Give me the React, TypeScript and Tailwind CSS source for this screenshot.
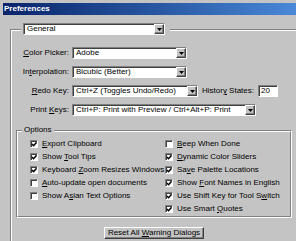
import type { ReactNode } from "react";

const sunken =
  "border border-t-[#808080] border-l-[#808080] border-b-white border-r-white shadow-[inset_1px_1px_0_#404040]";
const raised =
  "border border-t-white border-l-white border-b-[#404040] border-r-[#404040] shadow-[inset_-1px_-1px_0_#808080]";

const Select = ({ value, className }: { value: string; className: string }) => {
  return (
    <div className={`flex h-[12px] bg-white ${sunken} ${className}`}>
      <span className="flex-1 pl-[3px] leading-[10px] whitespace-nowrap overflow-hidden">{value}</span>
      <span className={`w-[10px] bg-[#c4c4c4] flex items-center justify-center ${raised}`}>
        <svg width="5" height="3" viewBox="0 0 5 3">
          <path d="M0 0H5L2.5 3Z" fill="#000" />
        </svg>
      </span>
    </div>
  );
};

const Check = ({ checked, children }: { checked: boolean; children: ReactNode }) => {
  return (
    <div className="flex items-center h-[13px] gap-[4px] whitespace-nowrap">
      <span className={`w-[8px] h-[8px] bg-white flex items-center justify-center ${sunken}`}>
        {checked && (
          <svg width="6" height="6" viewBox="0 0 7 7">
            <path d="M1 3.5L3 5.5L6.5 1.5" stroke="#000" strokeWidth="1.8" fill="none" />
          </svg>
        )}
      </span>
      <span className="leading-[10px]">{children}</span>
    </div>
  );
};

export default function App() {
  return (
    <div className="w-[296px] h-[241px] overflow-hidden bg-[#c4c4c4] pl-[3px] pt-[3px] text-[8px] text-black font-['Liberation_Sans',Arial,sans-serif]">
      <div className="h-[12px] bg-gradient-to-r from-[#0a246a] to-[#4a88d8] pl-[1px] flex items-center">
        <span className="text-white font-bold leading-[10px]">Preferences</span>
      </div>

      <div className="ml-[7px] mt-[14px] w-[300px] h-[240px] border-t border-l border-[#808080]">
        <div className="border-t border-l border-white h-full">
          <div className="-mt-[8px] ml-[9px] w-fit bg-[#c4c4c4] pl-[2px] pr-[5px]">
            <Select value="General" className="w-[142px]" />
          </div>

          <div className="mt-[12px] grid grid-cols-[57px_auto] gap-x-[3px] gap-y-[7px] items-center">
            <span className="text-right leading-[10px]">
              <u>C</u>olor Picker:
            </span>
            <Select value="Adobe" className="w-[115px]" />
            <span className="text-right leading-[10px]">
              In<u>t</u>erpolation:
            </span>
            <Select value="Bicubic (Better)" className="w-[115px]" />
            <span className="text-right leading-[10px]">
              <u>R</u>edo Key:
            </span>
            <div className="flex items-center">
              <Select value="Ctrl+Z (Toggles Undo/Redo)" className="w-[126px]" />
              <span className="ml-[4px] leading-[10px]">
                Histor<u>y</u> States:
              </span>
              <div className={`ml-[4px] w-[20px] h-[12px] bg-white pl-[2px] leading-[10px] ${sunken}`}>20</div>
            </div>
            <span className="text-right leading-[10px]">
              Print <u>K</u>eys:
            </span>
            <Select value="Ctrl+P: Print with Preview / Ctrl+Alt+P: Print" className="w-[184px]" />
          </div>

          <div className="ml-[4px] mt-[14px] w-[276px] h-[88px] border border-t-[#808080] border-l-[#808080] border-b-white border-r-white">
            <div className="h-full border border-t-white border-l-white border-b-[#808080] border-r-[#808080]">
              <div className="-mt-[7px] ml-[4px] w-fit bg-[#c4c4c4] px-[2px] leading-[10px]">Options</div>
              <div className="mt-[2px] pl-[12px] grid grid-cols-[135px_auto]">
                <Check checked>
                  <u>E</u>xport Clipboard
                </Check>
                <Check checked={false}>
                  <u>B</u>eep When Done
                </Check>
                <Check checked>
                  Show <u>T</u>ool Tips
                </Check>
                <Check checked>
                  <u>D</u>ynamic Color Sliders
                </Check>
                <Check checked>
                  Keyboard <u>Z</u>oom Resizes Windows
                </Check>
                <Check checked>
                  Sa<u>v</u>e Palette Locations
                </Check>
                <Check checked={false}>
                  <u>A</u>uto-update open documents
                </Check>
                <Check checked>
                  Show <u>F</u>ont Names in English
                </Check>
                <Check checked={false}>
                  Show A<u>s</u>ian Text Options
                </Check>
                <Check checked>
                  Use Shift Key for Tool S<u>w</u>itch
                </Check>
                <div />
                <Check checked>
                  Use Smart <u>Q</u>uotes
                </Check>
              </div>
            </div>
          </div>

          <button
            className={`block mt-[9px] ml-[92px] w-[100px] h-[12px] bg-[#c4c4c4] leading-[10px] text-[8px] ${raised}`}
          >
            Reset All <u>W</u>arning Dialogs
          </button>
        </div>
      </div>
    </div>
  );
}
